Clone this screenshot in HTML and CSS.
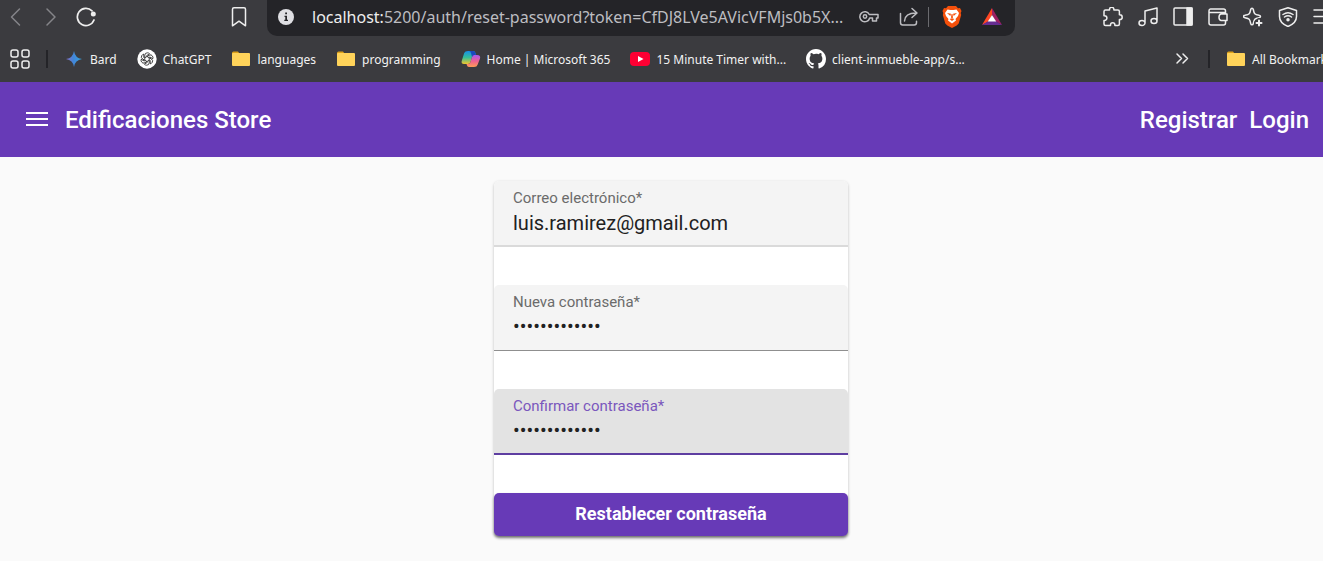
FILE: index.html
```html
<!DOCTYPE html>
<html lang="es">
<head>
<meta charset="utf-8">
<title>Edificaciones Store</title>
<link rel="stylesheet" href="styles.css">
</head>
<body>
<div class="browser">
  <div class="toolbar">
    <div class="nav">
      <button class="tool" aria-label="Back"><svg class="dim" width="20" height="20" viewBox="0 0 20 20"><path d="M13.500 2 5.500 10l8 8"/></svg></button>
      <button class="tool" aria-label="Forward"><svg class="dim" width="20" height="20" viewBox="0 0 20 20"><path d="m6 2 8 8-8 8"/></svg></button>
      <button class="tool" aria-label="Reload"><svg width="20" height="20" viewBox="0 0 20 20"><path d="M16 3.800A8.600 8.600 0 1 0 18 13" stroke-width="1.700"/><circle cx="17.300" cy="7" r="2.500" fill="#eee" stroke="none"/></svg></button>
      <button class="tool bookmark" aria-label="Bookmark"><svg width="20" height="20" viewBox="0 0 20 20"><path d="M5 .8h10q1.500 0 1.500 1.500v16.500L10 14.200l-6.500 4.600V2.300Q3.500.8 5 .8z"/></svg></button>
    </div>
    <div class="address">
      <svg width="16" height="16" viewBox="0 0 16 16"><circle cx="8" cy="8" r="8" fill="#dfdfe3" stroke="none"/><path d="M7.200 3.500h1.800v1.700H7.200zM6.500 6.700H9v4h1V12H6.300v-1.300h1V8h-.8z" fill="#242428" stroke="none"/></svg>
      <span class="url"><b>localhost:</b>5200/auth/reset-password?token=CfDJ8LVe5AVicVFMjs0b5X...</span>
      <button class="tool" aria-label="Password"><svg class="gray" width="20" height="20" viewBox="0 0 20 20"><path d="M10.300 7.500H19v3.500h-1.500v3h-4v-3h-2.800a5 5 0 1 1-.4-3.500z"/><circle cx="6" cy="9.500" r="1.700"/></svg></button>
      <button class="tool share" aria-label="Share"><svg class="gray" width="20" height="20" viewBox="0 0 20 20"><path d="M1.500 6.500v9.300q0 2.200 2.200 2.200h11.500q2.300 0 2.300-2.200v-1.500M5.500 14q.5-8 11.500-8M13 1.500 18 6l-5 4.500"/></svg></button>
      <span class="split"></span>
      <button class="tool" aria-label="Brave Shields"><svg width="20" height="22" viewBox="0 0 20 22" stroke="none"><path fill="#f5500b" d="M6 0h8l2 2.200 2-.2 1.500 3-.8 2 .5 2-2.500 8.500-2 2L10 22l-4.700-2.500-2-2L.8 9l.5-2L.5 5 2 2l2 .2z"/><path fill="#fff" d="m5.500 3.500 3 .5h3l3-.5 2.500 3.500-1 3-2.500 3 .5 1.500L10 17.500l-4-3 .5-1.500L4 10 3 7z"/><path fill="#f5500b" d="m5 7 4 .8-.7 2.200zm10 0-4 .8.700 2.200zM9.500 8h1l.5 3.500-1 1-1-1zM7.500 13l2.500-.8 2.500.8-2.500 2z"/></svg></button>
      <button class="tool rewards" aria-label="Brave Rewards"><svg width="22" height="20" viewBox="0 0 22 20" stroke="none"><path fill="#ff4724" d="M11 1 1 18l6.500-3.500L11 8z"/><path fill="#9e1f63" d="m11 1 10 17-6.500-3.500L11 8z"/><path fill="#662d91" d="M1 18h20l-6.500-4h-7z"/><path fill="#fff" d="m11 8-4.200 6.500h8.400z"/></svg></button>
    </div>
    <div class="actions">
      <button class="tool" aria-label="Extensions"><svg width="20" height="20" viewBox="0 0 20 20"><path d="M1 4.500Q1 3 2.500 3h4V2.500a2.200 2.200 0 0 1 4.400 0V3h4q1.500 0 1.500 1.500v3.300h.4a2.400 2.400 0 0 1 0 4.800h-.4V17q0 1.500-1.500 1.500h-3V18a2.200 2.200 0 0 0-4.400 0v.5h-5Q1 18.500 1 17v-3.500h.5a2.400 2.400 0 0 0 0-4.800H1z"/></svg></button>
      <button class="tool" aria-label="Media"><svg width="20" height="20" viewBox="0 0 20 20"><path d="M7 16V4l12-3v13M7 16a3 2.500 0 1 1-6 0 3 2.500 0 0 1 6 0zM19 14a3 2.500 0 1 1-6 0 3 2.500 0 0 1 6 0z"/></svg></button>
      <button class="tool" aria-label="Sidebar"><svg width="20" height="20" viewBox="0 0 20 20"><rect x="1" y="1" width="18" height="17" rx="1"/><path d="M14 1h5v17h-5z" fill="#eee"/></svg></button>
      <button class="tool" aria-label="Wallet"><svg width="20" height="20" viewBox="0 0 20 20"><path d="M17.500 6.500V4q0-2-2-2H2.500Q1 2 1 3.800V16q0 2 2 2h12.500q2 0 2-2v-2.500M1 5.500h16.500M19 7v6.500h-6q-2-.5-2-3.200T13 7z"/></svg></button>
      <button class="tool" aria-label="Leo"><svg width="20" height="20" viewBox="0 0 20 20"><path d="M9 1.200q1 0 1.300 1.300.7 3.500 1.500 4.300t4.300 1.500Q17.500 8.500 17.500 9.500t-1.400 1.200q-3.500.7-4.300 1.500t-1.500 4.300Q10 17.800 9 17.800t-1.300-1.300Q7 13 6.200 12.200t-4.300-1.500Q.5 10.500.5 9.500t1.400-1.200Q5.400 7.600 6.200 6.800t1.500-4.300Q8 1.200 9 1.200z"/><path d="M16 13.500v5M13.500 16h5" stroke="#3b3b3f" stroke-width="5"/><path d="M16 13.500v5M13.500 16h5" stroke-width="2"/></svg></button>
      <button class="tool" aria-label="VPN"><svg width="20" height="20" viewBox="0 0 20 20"><path d="m10 .8 8.500 2.700v6q0 6.500-8.500 10-8.500-3.500-8.500-10v-6zM5 7.500q5-3.500 10 0M6.500 10q3.500-2.500 7 0"/><circle cx="10" cy="12.700" r="1" fill="#eee"/></svg></button>
      <button class="tool" aria-label="Menu"><svg width="20" height="20" viewBox="0 0 20 20"><path d="M1 3h18M1 9.500h18M1 16h18"/></svg></button>
    </div>
  </div>
  <div class="bookmarks">
    <button class="tool" aria-label="Apps"><svg width="20" height="20" viewBox="0 0 20 20"><rect x="1" y="1" width="7" height="7" rx="2"/><rect x="12" y="1" width="7" height="7" rx="2"/><rect x="1" y="12" width="7" height="7" rx="2"/><rect x="12" y="12" width="7" height="7" rx="2"/></svg></button>
    <span class="bar"></span>
    <a href="#" class="mark"><svg width="20" height="20" viewBox="0 0 20 20" stroke="none"><defs><linearGradient id="g1"><stop stop-color="#8a70c8"/><stop offset=".45" stop-color="#4285d8"/><stop offset="1" stop-color="#35a5df"/></linearGradient></defs><path fill="url(#g1)" d="M10 2q1 7 8 8-7 1-8 8-1-7-8-8 7-1 8-8z"/></svg>Bard</a>
    <a href="#" class="mark"><svg width="20" height="20" viewBox="0 0 20 20" stroke="none"><circle cx="10" cy="10" r="9.700" fill="#fff"/><g fill="none" stroke="#222" stroke-width=".8"><path id="p" d="M7.800 11.200V6.300q0-2.500 2.500-2.500 1.500 0 2.300 1L9.800 6.500"/><use href="#p" transform="rotate(60 10 10)"/><use href="#p" transform="rotate(120 10 10)"/><use href="#p" transform="rotate(180 10 10)"/><use href="#p" transform="rotate(240 10 10)"/><use href="#p" transform="rotate(300 10 10)"/></g></svg>ChatGPT</a>
    <a href="#" class="mark"><svg width="20" height="20" viewBox="0 0 20 20" stroke="none"><path fill="#dda019" d="M1 4q0-1.500 1.500-1.500H7L8.500 4.500V8H1z"/><rect x="1" y="4" width="18" height="13" rx="1" fill="#ffd35a"/></svg>languages</a>
    <a href="#" class="mark"><svg width="20" height="20" viewBox="0 0 20 20" stroke="none"><path fill="#dda019" d="M1 4q0-1.500 1.500-1.500H7L8.500 4.500V8H1z"/><rect x="1" y="4" width="18" height="13" rx="1" fill="#ffd35a"/></svg>programming</a>
    <a href="#" class="mark"><svg width="20" height="20" viewBox="0 0 20 20" stroke="none"><defs><linearGradient id="g2" x2="0" y2="1"><stop stop-color="#168ee8"/><stop offset=".5" stop-color="#35bd98"/><stop offset="1" stop-color="#f3c52d"/></linearGradient><linearGradient id="g3" x2="0" y2="1"><stop stop-color="#a45af0"/><stop offset=".5" stop-color="#ed6092"/><stop offset="1" stop-color="#ff9c55"/></linearGradient></defs><path fill="url(#g2)" d="M7 2h5q2 0 2.500 2l.5 2h-2q-1.500 0-2 2l-1.500 5Q9 15 7 15H3q-3 0-2.300-3l2.500-8Q4 2 7 2z"/><path fill="url(#g3)" d="M13 6h3q4 0 3 3.500l-2.300 6Q16 18 13 18H8.500q-2 0-2.500-1.500L5.500 15H7q2 0 2.500-2L11 8q.5-2 2-2z"/><path fill="#1948bc" d="M12 2q2 0 2.500 2l.5 2h-2q-1.500 0-2 2L10 4q-.5-2-2-2z"/></svg>Home | Microsoft 365</a>
    <a href="#" class="mark"><svg width="20" height="20" viewBox="0 0 20 20" stroke="none"><rect y="3" width="20" height="14" rx="4" fill="#ff0033"/><path d="m8 7 5.500 3L8 13z" fill="#fff"/></svg>15 Minute Timer with...</a>
    <a href="#" class="mark"><svg width="20" height="20" viewBox="0 0 16 16" stroke="none"><path fill="#fff" d="M8 0C3.580 0 0 3.580 0 8c0 3.540 2.290 6.530 5.470 7.590.4.070.55-.17.55-.38v-1.490c-2.230.48-2.700-.95-2.700-.95-.36-.92-.89-1.170-.89-1.170-.73-.5.050-.49.050-.49.8.060 1.230.83 1.230.83.72 1.220 1.880.87 2.330.66.070-.52.280-.87.510-1.070-1.780-.2-3.640-.89-3.640-3.950 0-.87.310-1.590.82-2.150-.08-.2-.36-1.020.08-2.120 0 0 .67-.21 2.200.82A7.600 7.600 0 0 1 8 3.860c.68 0 1.360.09 2 .27 1.530-1.040 2.200-.82 2.200-.82.44 1.100.16 1.920.08 2.120.51.560.82 1.270.82 2.150 0 3.070-1.870 3.750-3.650 3.950.29.250.54.730.54 1.480v2.200c0 .21.150.46.550.38A8 8 0 0 0 16 8c0-4.420-3.580-8-8-8z"/></svg>client-inmueble-app/s...</a>
    <div class="overflow">
      <button class="tool" aria-label="More bookmarks"><svg width="20" height="20" viewBox="0 0 20 20"><path d="m5 5 4.500 4.500L5 14m6-9 4.500 4.500L11 14"/></svg></button>
      <span class="bar"></span>
      <a href="#" class="mark"><svg width="20" height="20" viewBox="0 0 20 20" stroke="none"><path fill="#dda019" d="M1 4q0-1.500 1.500-1.500H7L8.500 4.500V8H1z"/><rect x="1" y="4" width="18" height="13" rx="1" fill="#ffd35a"/></svg>All Bookmarks</a>
    </div>
  </div>
</div>
<header class="appbar">
  <button class="menu" aria-label="Menú"><svg width="24" height="25" viewBox="0 0 24 25"><path d="M1 6h22M1 12h22M1 18h22" stroke="#fff" stroke-width="2"/></svg></button>
  <a href="#" class="brand">Edificaciones Store</a>
  <nav class="links"><a href="#">Registrar</a><a href="#">Login</a></nav>
</header>
<main class="page">
  <form class="card">
    <div class="field readonly"><label for="mail">Correo electrónico*</label><input id="mail" type="text" value="luis.ramirez@gmail.com" readonly></div>
    <div class="field"><label for="pass">Nueva contraseña*</label><input id="pass" type="password" value="contrasena123"></div>
    <div class="field active"><label for="confirm">Confirmar contraseña*</label><input id="confirm" type="password" value="contrasena123"></div>
    <button type="button" class="submit">Restablecer contraseña</button>
  </form>
</main>
</body>
</html>
```
FILE: styles.css
```css
* { box-sizing: border-box; }
body {
  margin: 0;
  min-height: 100vh;
  background: #fafafa;
  font-family: Roboto, sans-serif;
  overflow-x: hidden;
}
a { color: inherit; text-decoration: none; }
button { border: 0; padding: 0; background: none; font: inherit; color: inherit; }
svg { display: block; flex: none; }

.browser {
  background: #3b3b3f;
  color: #f2f2f2;
  font-family: "Noto Sans", sans-serif;
  overflow: hidden;
}
.browser svg {
  fill: none;
  stroke: #eee;
  stroke-width: 1.5;
  stroke-linecap: round;
  stroke-linejoin: round;
}
.browser svg[stroke="none"] { stroke: none; }
.browser svg.dim { stroke: #858589; }
.browser svg.gray { stroke: #bdbdc1; }
.tool { flex: none; }
.toolbar { display: flex; height: 36px; }
.nav {
  flex: 0 0 267px;
  display: flex;
  align-items: center;
  gap: 15px;
  padding: 0 18px 2px 6px;
}
.bookmark { margin-left: auto; }
.address {
  flex: 1;
  min-width: 0;
  display: flex;
  align-items: center;
  padding: 0 12px 2px 11px;
  border-radius: 0 0 10px 10px;
  background: #242428;
}
.url {
  flex: 1;
  min-width: 0;
  overflow: hidden;
  margin-left: 18px;
  white-space: nowrap;
  font-size: 16px;
  color: #bdbdc1;
}
.url b { font-weight: 400; color: #eee; }
.share { margin-left: 20px; }
.split { width: 1px; height: 20px; margin: 0 13px 0 9px; background: #6b6b6f; }
.rewards { margin-left: 19px; }
.actions {
  flex: 0 0 308px;
  min-width: 0;
  display: flex;
  align-items: center;
  gap: 15px;
  padding: 0 0 2px 88px;
}

.bookmarks {
  display: flex;
  align-items: center;
  height: 46px;
  padding-left: 10px;
  gap: 20px;
  font-size: 12px;
}
.bar { flex: none; width: 2px; height: 18px; background: #242428; margin: 0 -4px; }
.mark { display: flex; align-items: center; gap: 6px; white-space: nowrap; flex: none; }
.overflow {
  flex: 0 0 151px;
  min-width: 0;
  margin-left: auto;
  display: flex;
  align-items: center;
  gap: 20px;
}

.appbar {
  display: flex;
  align-items: center;
  height: 75px;
  padding: 0 14px 0 25px;
  background: #673ab7;
  color: #fff;
  font-size: 24px;
  font-weight: 500;
}
.brand { margin-left: 16px; }
.links { display: flex; gap: 12px; margin-left: auto; }

.page { display: flex; justify-content: center; padding: 24px 0 24px 19px; }
.card {
  display: flex;
  flex-direction: column;
  gap: 38px;
  width: 354px;
  background: #fff;
  border-radius: 5px;
  box-shadow: 0 1px 3px rgba(0, 0, 0, .25);
}
.field {
  height: 66px;
  padding: 7px 19px 0;
  border-bottom: 1px solid #8f8f8f;
  border-radius: 5px 5px 0 0;
  background: #f4f4f4;
}
.field label { display: block; font-size: 15px; line-height: 21px; color: #6b6b6b; }
.field input {
  display: block;
  width: 100%;
  height: 28px;
  padding: 0;
  border: 0;
  outline: 0;
  background: none;
  font: 20px/28px Roboto, sans-serif;
  color: #212121;
}
.field input[type="password"] { height: 26px; }
.readonly { border-bottom: 2px solid #dadada; }
.active { border-bottom: 2px solid #5e3ea1; background: #e3e3e3; }
.active label { color: #7a57bd; }
.submit {
  height: 43px;
  padding-bottom: 2px;
  border-radius: 5px;
  background: #673ab7;
  color: #fff;
  font-size: 18px;
  font-weight: 700;
  box-shadow: 0 2px 3px rgba(0, 0, 0, .45);
}
```
